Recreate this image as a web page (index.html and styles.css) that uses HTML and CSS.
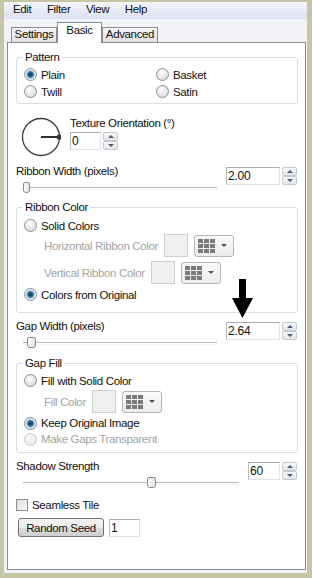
FILE: index.html
```html
<!DOCTYPE html>
<html lang="en">
<head>
    <meta charset="UTF-8">
    <title>Weave</title>
    <link rel="stylesheet" href="styles.css">
</head>
<body>
    <div class="frame">
        <div class="menubar">
            <span>Edit</span><span>Filter</span><span>View</span><span>Help</span>
        </div>
        <div class="tabs">
            <div class="tab tab-settings">Settings</div>
            <div class="tab tab-basic active">Basic</div>
            <div class="tab tab-advanced">Advanced</div>
        </div>
        <div class="panel">
            <fieldset class="group group-pattern">
                <legend>Pattern</legend>
                <div class="radio-grid">
                    <div class="opt"><span class="radio checked"></span>Plain</div>
                    <div class="opt"><span class="radio"></span>Basket</div>
                    <div class="opt"><span class="radio"></span>Twill</div>
                    <div class="opt"><span class="radio"></span>Satin</div>
                </div>
            </fieldset>

            <div class="orient">
                <svg class="dial" width="40" height="40" viewBox="0 0 40 40">
                    <circle cx="20" cy="20" r="18.5" fill="none" stroke="#3a3a3a" stroke-width="1.3"/>
                    <line x1="20" y1="20" x2="38" y2="20" stroke="#333" stroke-width="2"/>
                    <circle cx="38.3" cy="20" r="2.6" fill="#333"/>
                </svg>
                <div class="orient-side">
                    <div class="lbl">Texture Orientation (°)</div>
                    <div class="num-field">
                        <span class="num num-orient">0</span>
                        <span class="spin"><i class="up"></i><i class="down"></i></span>
                    </div>
                </div>
            </div>

            <div class="slider-block block-ribbon">
                <div class="slider-col">
                    <div class="lbl">Ribbon Width (pixels)</div>
                    <div class="slider"><span class="thumb" style="left: 0px"></span></div>
                </div>
                <div class="num-field">
                    <span class="num num-wide">2.00</span>
                    <span class="spin"><i class="up"></i><i class="down"></i></span>
                </div>
            </div>

            <fieldset class="group group-ribbon">
                <legend>Ribbon Color</legend>
                <div class="group-body">
                    <div class="opt"><span class="radio"></span>Solid Colors</div>
                    <div class="color-row row-horiz">
                        <span class="dim">Horizontal Ribbon Color</span>
                        <span class="swatch"></span>
                        <span class="picker">
                            <svg width="17" height="14" viewBox="0 0 17 14">
                                <g fill="#7b7b7b">
                                    <rect x="0" y="0" width="5" height="4"/><rect x="6" y="0" width="5" height="4"/><rect x="12" y="0" width="5" height="4"/>
                                    <rect x="0" y="5" width="5" height="4"/><rect x="6" y="5" width="5" height="4"/><rect x="12" y="5" width="5" height="4"/>
                                    <rect x="0" y="10" width="5" height="4"/><rect x="6" y="10" width="5" height="4"/><rect x="12" y="10" width="5" height="4"/>
                                </g>
                            </svg>
                            <i class="caret"></i>
                        </span>
                    </div>
                    <div class="color-row row-vert">
                        <span class="dim">Vertical Ribbon Color</span>
                        <span class="swatch"></span>
                        <span class="picker">
                            <svg width="17" height="14" viewBox="0 0 17 14">
                                <g fill="#7b7b7b">
                                    <rect x="0" y="0" width="5" height="4"/><rect x="6" y="0" width="5" height="4"/><rect x="12" y="0" width="5" height="4"/>
                                    <rect x="0" y="5" width="5" height="4"/><rect x="6" y="5" width="5" height="4"/><rect x="12" y="5" width="5" height="4"/>
                                    <rect x="0" y="10" width="5" height="4"/><rect x="6" y="10" width="5" height="4"/><rect x="12" y="10" width="5" height="4"/>
                                </g>
                            </svg>
                            <i class="caret"></i>
                        </span>
                    </div>
                    <div class="opt row-original"><span class="radio checked"></span>Colors from Original</div>
                </div>
            </fieldset>

            <div class="slider-block block-gap">
                <div class="slider-col">
                    <div class="lbl">Gap Width (pixels)</div>
                    <div class="slider"><span class="thumb thumb-wide" style="left: 4px"></span></div>
                </div>
                <div class="num-field">
                    <span class="num num-wide">2.64</span>
                    <span class="spin"><i class="up"></i><i class="down"></i></span>
                </div>
            </div>

            <fieldset class="group group-gap">
                <legend>Gap Fill</legend>
                <div class="group-body">
                    <div class="opt"><span class="radio"></span>Fill with Solid Color</div>
                    <div class="color-row row-fill">
                        <span class="dim">Fill Color</span>
                        <span class="swatch"></span>
                        <span class="picker">
                            <svg width="17" height="14" viewBox="0 0 17 14">
                                <g fill="#7b7b7b">
                                    <rect x="0" y="0" width="5" height="4"/><rect x="6" y="0" width="5" height="4"/><rect x="12" y="0" width="5" height="4"/>
                                    <rect x="0" y="5" width="5" height="4"/><rect x="6" y="5" width="5" height="4"/><rect x="12" y="5" width="5" height="4"/>
                                    <rect x="0" y="10" width="5" height="4"/><rect x="6" y="10" width="5" height="4"/><rect x="12" y="10" width="5" height="4"/>
                                </g>
                            </svg>
                            <i class="caret"></i>
                        </span>
                    </div>
                    <div class="opt row-keep"><span class="radio checked"></span>Keep Original Image</div>
                    <div class="opt row-transp dim"><span class="radio disabled"></span>Make Gaps Transparent</div>
                </div>
            </fieldset>

            <div class="slider-block block-shadow">
                <div class="slider-col">
                    <div class="lbl">Shadow Strength</div>
                    <div class="slider"><span class="thumb thumb-wide" style="left: 124px"></span></div>
                </div>
                <div class="num-field">
                    <span class="num num-small">60</span>
                    <span class="spin"><i class="up"></i><i class="down"></i></span>
                </div>
            </div>

            <div class="check-row"><span class="checkbox"></span>Seamless Tile</div>

            <div class="seed-row">
                <button type="button" class="button">Random Seed</button>
                <span class="num num-seed">1</span>
            </div>
        </div>
    </div>

    <svg class="arrow" width="21" height="40" viewBox="0 0 21 40">
        <rect x="7" y="0" width="7" height="21" fill="#000"/>
        <polygon points="0,19 21,19 10.5,39" fill="#000"/>
    </svg>
</body>
</html>
```

FILE: styles.css
```css
body {
    margin: 0;
    font-family: "Liberation Sans", Arial, sans-serif;
    font-size: 11.5px;
    letter-spacing: -0.35px;
    color: #111;
}
.frame {
    width: 312px;
    height: 578px;
    box-sizing: border-box;
    border-style: solid;
    border-color: #c6c6a4;
    border-width: 2px 5px 5px 4px;
    background-color: #f2f3f6;
    display: flex;
    flex-direction: column;
}
.menubar {
    height: 17px;
    line-height: 15px;
    padding-left: 9px;
    display: flex;
    gap: 15.5px;
    background: linear-gradient(#f4f5fb, #dde2f2);
}
.tabs {
    height: 23px;
    padding-left: 7px;
    display: flex;
    align-items: flex-end;
}
.tab {
    box-sizing: border-box;
    height: 15px;
    line-height: 13px;
    text-align: center;
    border: 1px solid #898c95;
    border-bottom: none;
    background: linear-gradient(#f4f4f4, #e1e1e1);
}
.tab-settings {
    width: 46px;
}
.tab-basic {
    width: 45px;
}
.tab-advanced {
    width: 56px;
}
.tab.active {
    height: 21px;
    line-height: 15px;
    margin-bottom: -1px;
    background: #fff;
    position: relative;
    z-index: 1;
}
.panel {
    flex: 1;
    margin: 0 1px 3px 3px;
    border: 1px solid #898c95;
    background-color: #fff;
}

/* group boxes */
.group {
    margin: 0 7px 0 8px;
    padding: 0;
    border: 1px solid #d5dfe5;
    border-radius: 3px;
}
.group legend {
    margin-left: 6px;
    padding: 0 2px;
    line-height: 14px;
}
.group-pattern {
    margin-top: 7px;
}
.group-ribbon {
    margin-top: 6px;
}
.group-gap {
    margin-top: 7px;
}
.radio-grid {
    display: grid;
    grid-template-columns: 132px 1fr;
    padding: 2px 7px 3px 7px;
}
.opt {
    display: flex;
    align-items: center;
    height: 17px;
}
.radio {
    width: 13px;
    height: 13px;
    box-sizing: border-box;
    border-radius: 50%;
    border: 1px solid #8f9090;
    background: radial-gradient(circle at 40% 35%, #ffffff, #dadada 80%);
    margin-right: 4px;
    flex-shrink: 0;
}
.radio.checked {
    background: radial-gradient(circle, #0f3b5c 0, #1c5b86 2px, #6fa8cf 3.5px, #e8eef3 4.5px, #d4d8dc 100%);
}
.radio.disabled {
    border-color: #c8c9ca;
    background: radial-gradient(circle at 40% 35%, #fafafa, #e9e9e9 80%);
}
.dim {
    color: #a3a3a3;
}
.group-body {
    padding: 3px 7px 9px 7px;
}
.color-row {
    display: flex;
    align-items: center;
    gap: 6px;
    padding-left: 20px;
    height: 23px;
}
.row-vert {
    margin-top: 4px;
}
.row-original {
    margin-top: 2px;
}
.row-fill {
    margin-top: 1px;
}
.row-keep {
    margin-top: 2px;
    height: 16px;
}
.row-transp {
    height: 16px;
}
.group-gap .group-body {
    padding: 2px 7px 5px 7px;
}
.swatch {
    width: 24px;
    height: 23px;
    box-sizing: border-box;
    border: 1px solid #cfcfcf;
    background-color: #f0f0f0;
}
.picker {
    width: 40px;
    height: 22px;
    box-sizing: border-box;
    border: 1px solid #b5b5b5;
    border-radius: 3px;
    background: linear-gradient(#fafafa, #ececec);
    display: flex;
    align-items: center;
    padding-left: 3px;
}
.caret {
    margin-left: 6px;
    border-left: 3px solid transparent;
    border-right: 3px solid transparent;
    border-top: 3px solid #555;
}

/* texture orientation */
.orient {
    display: flex;
    margin-top: 12px;
    height: 40px;
}
.dial {
    margin: 1px 9px 0 13px;
}
.orient-side .lbl {
    line-height: 14px;
}
.orient-side .num-field {
    margin-top: 2px;
}

/* number fields */
.num-field {
    display: flex;
    gap: 2px;
}
.num {
    box-sizing: border-box;
    height: 18px;
    line-height: 16px;
    padding-left: 1px;
    border: 1px solid #e2e3ea;
    border-top-color: #abadb3;
    border-left-color: #b8bac0;
    background-color: #fff;
    font-size: 12px;
    letter-spacing: -0.2px;
}
.num-orient {
    width: 31px;
}
.num-wide {
    width: 54px;
}
.num-small {
    width: 32px;
}
.spin {
    width: 15px;
    height: 18px;
    display: flex;
    flex-direction: column;
    gap: 0;
}
.spin i {
    flex: 1;
    box-sizing: border-box;
    border: 1px solid #c3c9d1;
    border-radius: 2px;
    background: linear-gradient(#f8f8f8, #e3e5e8);
    display: flex;
    align-items: center;
    justify-content: center;
}
.spin i::after {
    content: "";
    border-left: 3px solid transparent;
    border-right: 3px solid transparent;
}
.spin .up::after {
    border-bottom: 3px solid #4a5a78;
}
.spin .down::after {
    border-top: 3px solid #4a5a78;
}

/* sliders */
.slider-block {
    display: flex;
    margin: 8px 8px 0 0;
}
.block-gap,
.block-shadow {
    margin-top: 6px;
}
.slider-col {
    flex: 1;
    margin-right: 9px;
}
.slider-col .lbl {
    line-height: 14px;
    padding-left: 8px;
}
.slider-block .num-field {
    margin-top: 3px;
}
.slider {
    position: relative;
    height: 16px;
    margin-left: 15px;
}
.slider::before {
    content: "";
    position: absolute;
    left: 0;
    right: 0;
    top: 9px;
    height: 1px;
    border-top: 1px solid #b9b9b9;
    border-bottom: 1px solid #f4f4f4;
}
.thumb {
    position: absolute;
    top: 4px;
    width: 7px;
    height: 11px;
    box-sizing: border-box;
    border: 1px solid #8a8a8a;
    border-radius: 2px 2px 3px 3px;
    background: linear-gradient(90deg, #fdfdfd, #e2e2e2);
}
.thumb-wide {
    width: 9px;
}

/* bottom rows */
.check-row {
    display: flex;
    align-items: center;
    height: 16px;
    margin: 8px 0 0 8px;
}
.checkbox {
    width: 12px;
    height: 12px;
    box-sizing: border-box;
    border: 1px solid #8f8f8f;
    background: linear-gradient(135deg, #dcdcdc, #fbfbfb);
    margin-right: 4px;
}
.seed-row {
    display: flex;
    align-items: center;
    gap: 5px;
    margin: 5px 0 0 10px;
}
.button {
    width: 86px;
    height: 19px;
    padding: 0;
    border: 1px solid #707070;
    border-radius: 3px;
    background: linear-gradient(#f3f3f3 0, #ebebeb 50%, #dddddd 51%, #cfcfcf 100%);
    font-family: inherit;
    font-size: 11.5px;
    letter-spacing: -0.35px;
    color: #111;
}
.num-seed {
    width: 31px;
}

.arrow {
    position: absolute;
    left: 232px;
    top: 279px;
}
```
